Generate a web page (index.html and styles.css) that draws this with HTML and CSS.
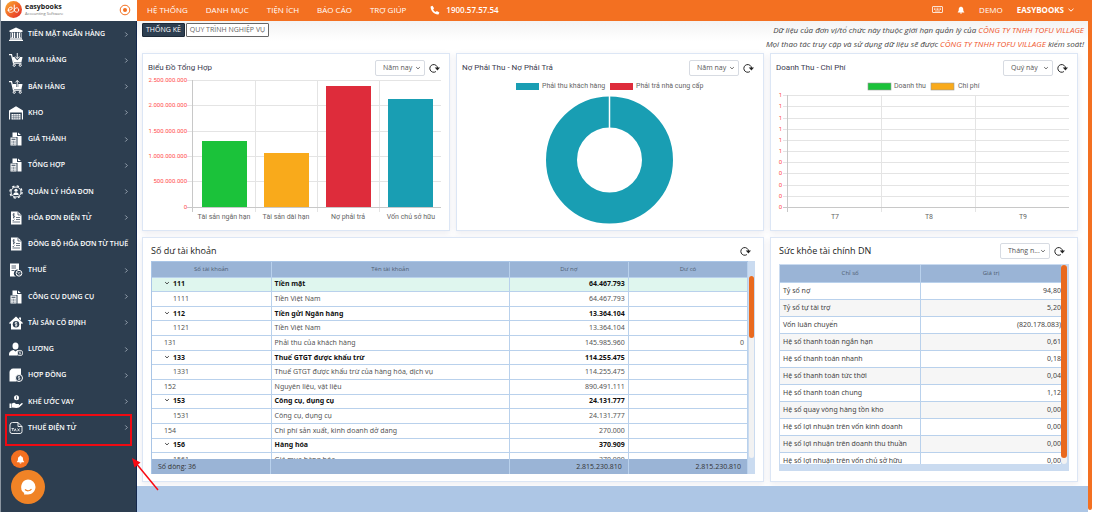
FILE: index.html
```html
<!DOCTYPE html>
<html lang="vi">
<head>
<meta charset="utf-8">
<title>EasyBooks</title>
<link rel="stylesheet" href="styles.css">
</head>
<body>
<svg class="defs" aria-hidden="true">
  <symbol id="i-chev" viewBox="0 0 6 8"><path d="M1.5 1.5 4 4 1.5 6.5" fill="none" stroke="currentColor"/></symbol>
  <symbol id="i-down" viewBox="0 0 8 8"><path d="M1.5 2.8 4 5.2 6.500 2.800" fill="none" stroke="currentColor"/></symbol>
  <symbol id="i-reload" viewBox="0 0 20 18"><path d="M12.500 15.500A7 7 0 1 1 15.500 9" fill="none" stroke="currentColor" stroke-width="1.800"/><path d="M10.500 8h9.500l-4.700 5.500z" fill="currentColor"/></symbol>
  <symbol id="i-bell" viewBox="0 0 16 16"><path d="M8 1c.8 0 1.200.5 1.200 1.200C11.500 2.800 12.500 4.600 12.500 7c0 3 .8 4 2 5v.8h-13V12c1.200-1 2-2 2-5 0-2.400 1-4.200 3.300-4.800C6.800 1.500 7.200 1 8 1zM6 13.500h4c-.2 1-1 1.800-2 1.800s-1.800-.8-2-1.800z" fill="currentColor"/></symbol>
  <symbol id="i-bank" viewBox="0 0 28 28"><path d="M14 1 27 7v3H1V7zM3 11h5v11H3zM9.500 11h3v11h-3zM15.500 11h3v11h-3zM20 11h5v11h-5zM2 22.500h24V25H2zM0 25.500h28V28H0z" fill="currentColor"/><path d="M5 12v9M23 12v9" stroke="#2d3e50" stroke-width="1.500"/></symbol>
  <symbol id="i-cart" viewBox="0 0 28 28"><path d="M0 3h5l4 17h16" fill="none" stroke="currentColor" stroke-width="2.500"/><path d="M7 8h20l-2 10H9z" fill="currentColor"/><circle cx="10.500" cy="24.500" r="2.200" fill="none" stroke="currentColor" stroke-width="2"/><circle cx="22.500" cy="24.500" r="2.200" fill="none" stroke="currentColor" stroke-width="2"/></symbol>
  <symbol id="i-cart-in" viewBox="0 0 28 28"><use href="#i-cart"/><path d="M16.500 1v10m-4-3.500 4 4 4-4" fill="none" stroke="#2d3e50" stroke-width="4"/><path d="M16.500 0v11m-4-4 4 4 4-4" fill="none" stroke="currentColor" stroke-width="1.800"/></symbol>
  <symbol id="i-cart-out" viewBox="0 0 28 28"><use href="#i-cart"/><path d="M16.500 14V2m-4 4 4-4 4 4" fill="none" stroke="#2d3e50" stroke-width="4"/><path d="M16.500 14V1m-4 4 4-4 4 4" fill="none" stroke="currentColor" stroke-width="1.800"/></symbol>
  <symbol id="i-store" viewBox="0 0 28 28"><path d="M1 27V10L14 2l13 8v17" fill="none" stroke="currentColor" stroke-width="2.500"/><path d="M2 9 14 2l12 7v4H2z" fill="currentColor"/><path d="M5 16h18v11H5z" fill="currentColor"/><path d="M5 19.500h18M5 23.500h18M9.500 16v11M14 16v11M18.500 16v11" stroke="#2d3e50"/></symbol>
  <symbol id="i-calc" viewBox="0 0 28 28"><path d="M7 1h9v7h9v19h-8V10H7zM18 1l6 5h-6z" fill="currentColor"/><path d="M3 11h12v16H3z" fill="currentColor"/><path d="M5 14.500h8" stroke="#2d3e50" stroke-width="2"/><path d="M5 18.500h8M5 21.500h8M5 24.500h8" stroke="#2d3e50" stroke-width="1.400" stroke-dasharray="2 1"/></symbol>
  <symbol id="i-gear" viewBox="0 0 28 28"><circle cx="14" cy="14" r="10" fill="none" stroke="currentColor" stroke-width="2"/><circle cx="14" cy="14" r="12.200" fill="none" stroke="currentColor" stroke-width="2.500" stroke-dasharray="4.790"/><circle cx="14" cy="10.500" r="3.200" fill="currentColor"/><path d="M8.500 20c0-4 2.500-5.500 5.500-5.500s5.500 1.500 5.500 5.500z" fill="currentColor"/></symbol>
  <symbol id="i-doc" viewBox="0 0 28 28"><path d="M4 1h14l7 7v19H4z" fill="currentColor"/><path d="M18 1v7h7M14 13h8M14 17h8M7 22h15M11 6c-4 0-4 3-1.500 3.500s2.500 3.500-1.500 3.500M9.500 4v11M7 18l1.500 1.500L11 17" fill="none" stroke="#2d3e50" stroke-width="1.400"/></symbol>
  <symbol id="i-taxdoc" viewBox="0 0 28 28"><path d="M2 1h18v13a7 7 0 0 0-6 13H2z" fill="currentColor"/><path d="M5 6h9M5 10h9M5 15h6" stroke="#2d3e50" stroke-width="1.600"/><circle cx="20" cy="20.500" r="5.800" fill="none" stroke="currentColor" stroke-width="2"/><path d="m17.500 23 5-5" stroke="currentColor" stroke-width="1.500"/><circle cx="18" cy="19" r="1" fill="currentColor"/><circle cx="22" cy="22.500" r="1" fill="currentColor"/></symbol>
  <symbol id="i-house" viewBox="0 0 28 28"><path d="M14 1 28 14l-2 2-2-1.500V27H4V14.500L2 16l-2-2zM20 3h4v6l-4-4z" fill="currentColor"/><circle cx="14" cy="16.500" r="6.500" fill="#2d3e50"/><path d="M16.500 14c-1-1.500-4.500-1.500-4.500.5s4.500 1.500 4.500 3.500-3.500 2-4.500.5M14 11.500v10" fill="none" stroke="currentColor" stroke-width="1.500"/></symbol>
  <symbol id="i-user" viewBox="0 0 28 28"><ellipse cx="13" cy="8" rx="6" ry="7" fill="currentColor"/><path d="M0 26c0-7 4-9 9-10l4 3 4-3c3 .5 5 1.500 6 3l-6 8H0z" fill="currentColor"/><circle cx="22" cy="22" r="5.500" fill="#2d3e50" stroke="currentColor" stroke-width="1.600"/><path d="M23.500 20.500c-1-1-3-.8-3 .4s3 .9 3 2.200-2 1.400-3 .5M22 18.500v7" fill="none" stroke="currentColor"/></symbol>
  <symbol id="i-contract" viewBox="0 0 28 28"><path d="M7 1h17v13l-9 5v8H1V7zM1 6l5-5v5z" fill="currentColor"/><circle cx="20" cy="20" r="7" fill="#2d3e50" stroke="currentColor" stroke-width="2"/><path d="M22 17.800c-1-1.300-4-1-4 .5s4 1.500 4 3.200-3 1.700-4 .5M20 15.500v9" fill="none" stroke="currentColor" stroke-width="1.300"/></symbol>
  <symbol id="i-hand" viewBox="0 0 28 28"><circle cx="15" cy="5.500" r="5" fill="currentColor"/><path d="M15 2.500v6" stroke="#2d3e50" stroke-width="1.500"/><path d="M1 17h4v9H1zM6 17c4-3 6-1 8 1h5c1.500 0 1.500 2.500 0 2.500h-5 6l5-4c1.500-1 3 .5 2 2l-7 6.500c-3 1.500-8 1-14 0z" fill="currentColor"/></symbol>
  <symbol id="i-tax" viewBox="0 0 28 28"><path d="M7 3h11l8 8v10a4 4 0 0 1-4 4H6a4 4 0 0 1-4-4V8a5 5 0 0 1 5-5zM18 3v8h8" fill="none" stroke="currentColor" stroke-width="1.800"/><path d="M5 15h5M7.500 15v5M10.500 20.500l2-5 2 5M17 15l4 5.500M21 15l-4 5.500" fill="none" stroke="currentColor" stroke-width="1.500"/></symbol>
</svg>

<div class="app">
  <aside class="sidebar">
    <div class="brand">
      <svg class="brand-mark" viewBox="0 0 34 34" aria-hidden="true">
        <defs><linearGradient id="g" x1="0" y1="0" x2="1" y2="1"><stop offset="0" stop-color="#fbb034"/><stop offset=".5" stop-color="#f26a2a"/><stop offset="1" stop-color="#e0262c"/></linearGradient></defs>
        <circle cx="17" cy="17" r="17" fill="url(#g)"/>
        <path d="M6 18.500c5 0 8.500-1.500 8.500-4.500 0-3.500-8-2-8 4 0 6 8 6 12 1V8M18.500 18c1-6 9-6 9 0s-9 6-9 0" fill="none" stroke="#fff" stroke-width="2" stroke-linecap="round"/>
      </svg>
      <div class="brand-text"><strong>easybooks</strong><small>Accounting Software</small></div>
      <button class="pin" type="button" aria-label="Thu gọn menu"><svg viewBox="0 0 12 12"><circle cx="6" cy="6" r="4.800" fill="none" stroke="#f37021"/><circle cx="6" cy="6" r="2" fill="#f37021"/></svg></button>
    </div>
    <nav class="menu">
      <a href="#"><svg class="ic"><use href="#i-bank"/></svg><span>TIỀN MẶT NGÂN HÀNG</span><svg class="chev"><use href="#i-chev"/></svg></a>
      <a href="#"><svg class="ic"><use href="#i-cart-in"/></svg><span>MUA HÀNG</span><svg class="chev"><use href="#i-chev"/></svg></a>
      <a href="#"><svg class="ic"><use href="#i-cart-out"/></svg><span>BÁN HÀNG</span><svg class="chev"><use href="#i-chev"/></svg></a>
      <a href="#"><svg class="ic"><use href="#i-store"/></svg><span>KHO</span><svg class="chev"><use href="#i-chev"/></svg></a>
      <a href="#"><svg class="ic"><use href="#i-calc"/></svg><span>GIÁ THÀNH</span><svg class="chev"><use href="#i-chev"/></svg></a>
      <a href="#"><svg class="ic"><use href="#i-calc"/></svg><span>TỔNG HỢP</span><svg class="chev"><use href="#i-chev"/></svg></a>
      <a href="#"><svg class="ic"><use href="#i-gear"/></svg><span>QUẢN LÝ HÓA ĐƠN</span><svg class="chev"><use href="#i-chev"/></svg></a>
      <a href="#"><svg class="ic"><use href="#i-doc"/></svg><span>HÓA ĐƠN ĐIỆN TỬ</span><svg class="chev"><use href="#i-chev"/></svg></a>
      <a href="#"><svg class="ic"><use href="#i-doc"/></svg><span>ĐỒNG BỘ HÓA ĐƠN TỪ THUẾ</span><svg class="chev"><use href="#i-chev"/></svg></a>
      <a href="#"><svg class="ic"><use href="#i-taxdoc"/></svg><span>THUẾ</span><svg class="chev"><use href="#i-chev"/></svg></a>
      <a href="#"><svg class="ic"><use href="#i-calc"/></svg><span>CÔNG CỤ DỤNG CỤ</span><svg class="chev"><use href="#i-chev"/></svg></a>
      <a href="#"><svg class="ic"><use href="#i-house"/></svg><span>TÀI SẢN CỐ ĐỊNH</span><svg class="chev"><use href="#i-chev"/></svg></a>
      <a href="#"><svg class="ic"><use href="#i-user"/></svg><span>LƯƠNG</span><svg class="chev"><use href="#i-chev"/></svg></a>
      <a href="#"><svg class="ic"><use href="#i-contract"/></svg><span>HỢP ĐỒNG</span><svg class="chev"><use href="#i-chev"/></svg></a>
      <a href="#"><svg class="ic"><use href="#i-hand"/></svg><span>KHẾ ƯỚC VAY</span><svg class="chev"><use href="#i-chev"/></svg></a>
      <a href="#" class="marked"><svg class="ic"><use href="#i-tax"/></svg><span>THUẾ ĐIỆN TỬ</span><svg class="chev"><use href="#i-chev"/></svg>
        <svg class="pointer" viewBox="0 0 28 34" aria-hidden="true"><path d="M27 33 4 5" stroke="#f80a12" stroke-width="1.500"/><path d="M1 1l2.500 9.500L9.500 5.500z" fill="#f80a12"/></svg></a>
    </nav>
    <div class="widgets">
      <button class="w-bell" type="button" aria-label="Thông báo"><svg><use href="#i-bell"/></svg></button>
      <button class="w-chat" type="button" aria-label="Trò chuyện"><svg viewBox="0 0 16 16"><path d="M8 .5a7.500 7.500 0 0 1 7.500 7.500c0 4-3.500 7.500-7.500 7.500l-1.500-.1L4 15.500l.2-1.500A7.500 7.500 0 0 1 8 .5z" fill="#fff"/><path d="M5 10.500c2 2 5 1.500 6.500-.5" fill="none" stroke="#f08326" stroke-width="1.200"/></svg></button>
    </div>
  </aside>

  <div class="page">
    <header class="topbar">
      <nav class="topnav">
        <a href="#">HỆ THỐNG</a><a href="#">DANH MỤC</a><a href="#">TIỆN ÍCH</a><a href="#">BÁO CÁO</a><a href="#">TRỢ GIÚP</a>
      </nav>
      <a class="phone" href="#"><svg viewBox="0 0 16 16"><path d="M1 2.500 4 1l2.500 4L5 7c1 2 2 3 4 4l2-1.500 4 2.500-1.500 3C7 15.500.5 9 1 2.500z" fill="#fff"/></svg>1900.57.57.54</a>
      <div class="account">
        <button type="button" aria-label="Bàn phím"><svg class="kbd" viewBox="0 0 22 14"><rect x="1" y="1" width="20" height="12" rx="1" fill="none" stroke="#fff" stroke-width="1.600"/><path d="M4 4.500h14M4 7h14" stroke="#fff" stroke-width="1.400" stroke-dasharray="2 1"/><path d="M6 10h10" stroke="#fff" stroke-width="1.400"/></svg></button>
        <button type="button" aria-label="Thông báo"><svg class="bell"><use href="#i-bell"/></svg></button>
        <span class="demo">DEMO</span>
        <button type="button" class="user">EASYBOOKS<svg><use href="#i-down"/></svg></button>
      </div>
    </header>

    <div class="body">
      <main class="main">
        <div class="intro">
          <div class="tabs"><button type="button" class="tab active">THỐNG KÊ</button><button type="button" class="tab">QUY TRÌNH NGHIỆP VỤ</button></div>
          <p class="notice">Dữ liệu của đơn vị/tổ chức này thuộc giới hạn quản lý của <b>CÔNG TY TNHH TOFU VILLAGE</b><br>Mọi thao tác truy cập và sử dụng dữ liệu sẽ được <b>CÔNG TY TNHH TOFU VILLAGE</b> kiểm soát!</p>
        </div>

        <div class="grid">
          <section class="card">
            <div class="card-head"><h2>Biểu Đồ Tổng Hợp</h2>
              <span class="pick"><select aria-label="Kỳ biểu đồ tổng hợp"><option>Năm nay</option></select><svg><use href="#i-down"/></svg></span>
              <button class="reload" type="button" aria-label="Tải lại"><svg><use href="#i-reload"/></svg></button></div>
            <svg class="chart" viewBox="0 0 306 148" role="img" aria-label="Biểu đồ tổng hợp">
              <path class="gridline" d="M44 4.500h254M44 29.500h254M44 55.500h254M44 80.500h254M44 105.500h254M112.500 4v132M174.500 4v132M236.500 4v132"/>
              <path class="axis" d="M49.500 4v132M44 131.500h254"/>
              <rect x="59" y="65" width="45" height="66" fill="#1bc23a"/><rect x="121" y="77" width="45" height="54" fill="#f9aa1b"/><rect x="183" y="10" width="45" height="121" fill="#de2c3b"/><rect x="245" y="23" width="45" height="108" fill="#199eb3"/>
              <g class="yt"><text x="44" y="6">2.500.000.000</text><text x="44" y="31">2.000.000.000</text><text x="44" y="57">1.500.000.000</text><text x="44" y="82">1.000.000.000</text><text x="44" y="107">500.000.000</text><text x="44" y="133">0</text></g>
              <g class="xt"><text x="81" y="143">Tài sản ngắn hạn</text><text x="143" y="143">Tài sản dài hạn</text><text x="205" y="143">Nợ phải trả</text><text x="268" y="143">Vốn chủ sở hữu</text></g>
            </svg>
          </section>

          <section class="card">
            <div class="card-head"><h2>Nợ Phải Thu - Nợ Phải Trả</h2>
              <span class="pick"><select aria-label="Kỳ nợ phải thu, phải trả"><option>Năm nay</option></select><svg><use href="#i-down"/></svg></span>
              <button class="reload" type="button" aria-label="Tải lại"><svg><use href="#i-reload"/></svg></button></div>
            <svg class="chart" viewBox="0 0 306 148" role="img" aria-label="Nợ phải thu, nợ phải trả">
              <rect x="59" y="7" width="23" height="7" fill="#199eb3"/><rect x="153" y="7" width="23" height="7" fill="#de2c3b"/>
              <g class="lt"><text x="85" y="12">Phải thu khách hàng</text><text x="179" y="12">Phải trả nhà cung cấp</text></g>
              <circle cx="152.500" cy="84" r="48" fill="none" stroke="#199eb3" stroke-width="31"/>
              <path d="M152.500 20v32" stroke="#fff" stroke-width="1.500"/>
            </svg>
          </section>

          <section class="card">
            <div class="card-head"><h2>Doanh Thu - Chi Phí</h2>
              <span class="pick"><select aria-label="Kỳ doanh thu, chi phí"><option>Quý này</option></select><svg><use href="#i-down"/></svg></span>
              <button class="reload" type="button" aria-label="Tải lại"><svg><use href="#i-reload"/></svg></button></div>
            <svg class="chart" viewBox="0 0 306 148" role="img" aria-label="Doanh thu, chi phí">
              <g stroke="#999" stroke-width=".6"><rect x="97" y="7" width="23" height="7" fill="#1bc23a"/><rect x="160" y="7" width="23" height="7" fill="#f9aa1b"/></g>
              <g class="lt"><text x="123" y="12">Doanh thu</text><text x="187" y="12">Chi phí</text></g>
              <path class="gridline" d="M12 19.500h286M12 30.500h286M12 42.500h286M12 53.500h286M12 64.500h286M12 75.500h286M12 86.500h286M12 97.500h286M12 109.500h286M12 120.500h286M110.500 19v117M204.500 19v117"/>
              <path class="axis" d="M16.500 19v117M12 131.500h286"/>
              <g class="yt"><text x="11" y="21">1</text><text x="11" y="32">1</text><text x="11" y="44">1</text><text x="11" y="55">1</text><text x="11" y="66">1</text><text x="11" y="77">1</text><text x="11" y="88">0</text><text x="11" y="99">0</text><text x="11" y="111">0</text><text x="11" y="122">0</text><text x="11" y="133">0</text></g>
              <g class="xt"><text x="64" y="143">T7</text><text x="158" y="143">T8</text><text x="252" y="143">T9</text></g>
            </svg>
          </section>

          <section class="card table-card wide">
            <div class="card-head"><h2>Số dư tài khoản</h2>
              <button class="reload" type="button" aria-label="Tải lại"><svg><use href="#i-reload"/></svg></button></div>
            <div class="frame">
              <div class="sheet">
                <div class="clip">
                  <table class="ledger">
                    <colgroup><col class="c1"><col class="c2"><col class="c1"><col class="c1"></colgroup>
                    <thead><tr><th>Số tài khoản</th><th>Tên tài khoản</th><th>Dư nợ</th><th>Dư có</th></tr></thead>
                    <tbody>
                      <tr class="sum sel"><td><svg><use href="#i-down"/></svg>111</td><td>Tiền mặt</td><td>64.467.793</td><td></td></tr>
                      <tr class="sub"><td>1111</td><td>Tiền Việt Nam</td><td>64.467.793</td><td></td></tr>
                      <tr class="sum"><td><svg><use href="#i-down"/></svg>112</td><td>Tiền gửi Ngân hàng</td><td>13.364.104</td><td></td></tr>
                      <tr class="sub"><td>1121</td><td>Tiền Việt Nam</td><td>13.364.104</td><td></td></tr>
                      <tr><td>131</td><td>Phải thu của khách hàng</td><td>145.985.960</td><td>0</td></tr>
                      <tr class="sum"><td><svg><use href="#i-down"/></svg>133</td><td>Thuế GTGT được khấu trừ</td><td>114.255.475</td><td></td></tr>
                      <tr class="sub"><td>1331</td><td>Thuế GTGT được khấu trừ của hàng hóa, dịch vụ</td><td>114.255.475</td><td></td></tr>
                      <tr><td>152</td><td>Nguyên liệu, vật liệu</td><td>890.491.111</td><td></td></tr>
                      <tr class="sum"><td><svg><use href="#i-down"/></svg>153</td><td>Công cụ, dụng cụ</td><td>24.131.777</td><td></td></tr>
                      <tr class="sub"><td>1531</td><td>Công cụ, dụng cụ</td><td>24.131.777</td><td></td></tr>
                      <tr><td>154</td><td>Chi phí sản xuất, kinh doanh dở dang</td><td>270.000</td><td></td></tr>
                      <tr class="sum"><td><svg><use href="#i-down"/></svg>156</td><td>Hàng hóa</td><td>370.909</td><td></td></tr>
                      <tr class="sub"><td>1561</td><td>Giá mua hàng hóa</td><td>370.909</td><td></td></tr>
                    </tbody>
                  </table>
                </div>
                <div class="totals"><span>Số dòng: 36</span><span></span><span>2.815.230.810</span><span>2.815.230.810</span></div>
              </div>
              <div class="scroll"><div class="track"><i></i></div></div>
            </div>
          </section>

          <section class="card table-card">
            <div class="card-head"><h2>Sức khỏe tài chính DN</h2>
              <span class="pick"><select aria-label="Kỳ sức khỏe tài chính"><option>Tháng n...</option></select><svg><use href="#i-down"/></svg></span>
              <button class="reload" type="button" aria-label="Tải lại"><svg><use href="#i-reload"/></svg></button></div>
            <div class="frame health-frame">
              <div class="clip">
                <table class="health">
                  <thead><tr><th>Chỉ số</th><th>Giá trị</th></tr></thead>
                  <tbody>
                    <tr><td>Tỷ số nợ</td><td>94,80</td></tr>
                    <tr><td>Tỷ số tự tài trợ</td><td>5,20</td></tr>
                    <tr><td>Vốn luân chuyển</td><td>(820.178.083)</td></tr>
                    <tr><td>Hệ số thanh toán ngắn hạn</td><td>0,61</td></tr>
                    <tr><td>Hệ số thanh toán nhanh</td><td>0,18</td></tr>
                    <tr><td>Hệ số thanh toán tức thời</td><td>0,04</td></tr>
                    <tr><td>Hệ số thanh toán chung</td><td>1,12</td></tr>
                    <tr><td>Hệ số quay vòng hàng tồn kho</td><td>0,00</td></tr>
                    <tr><td>Hệ số lợi nhuận trên vốn kinh doanh</td><td>0,00</td></tr>
                    <tr><td>Hệ số lợi nhuận trên doanh thu thuần</td><td>0,00</td></tr>
                    <tr><td>Hệ số lợi nhuận trên vốn chủ sở hữu</td><td>0,00</td></tr>
                  </tbody>
                </table>
              </div>
              <div class="health-scroll"><i></i></div>
            </div>
          </section>
        </div>
        <footer class="foot"></footer>
      </main>
      <div class="page-scroll"></div>
    </div>
  </div>
</div>
</body>
</html>
```

FILE: styles.css
```css
* { box-sizing: border-box; }
body { margin: 0; background: #fff; color: #444; font: 7px/10px "Open Sans", "Noto Sans", sans-serif; }
a { color: inherit; text-decoration: none; }
button { margin: 0; padding: 0; border: 0; background: none; color: inherit; font: inherit; }
svg { display: block; }
.defs { position: absolute; width: 0; height: 0; }
.app { display: flex; min-height: 100vh; padding-bottom: 1px; }

/* Sidebar */
.sidebar { display: flex; flex-direction: column; flex: 0 0 137px; min-width: 0; border-left: 1px solid #8c96a1; border-right: 1px solid #14284d; background: #2d3e50; color: #fff; }
.brand { display: flex; align-items: center; gap: 3px; height: 21px; margin-right: -1px; padding: 0 6px 2px 4px; background: #fff; color: #222; }
.brand-mark { width: 17px; height: 17px; }
.brand-text { display: flex; flex-direction: column; flex: 1; }
.brand-text strong { font-size: 7px; line-height: 8px; }
.brand-text small { font-size: 4px; line-height: 6px; color: #777; }
.pin svg { width: 12px; height: 12px; }
.menu { display: flex; flex-direction: column; flex: 1; }
.menu a { position: relative; display: flex; flex: 1; align-items: center; padding: 0 7px 0 8px; white-space: nowrap; font-size: 7px; font-weight: 600; line-height: 10px; }
.menu span { flex: 1 1 0; min-width: 0; margin-left: 5px; }
.ic { flex: none; width: 14px; height: 14px; }
.chev { flex: none; width: 5px; height: 7px; color: #a9b4c0; }
.marked::after { content: ""; position: absolute; inset: -1px 4px -5px 4px; border: 2px solid #f00a12; }
.menu .pointer { position: absolute; left: 130px; top: 42px; width: 28px; height: 34px; z-index: 2; }
.widgets { display: flex; flex-direction: column; align-items: flex-start; gap: 2px; padding: 9px 0 8px 10px; }
.w-bell, .w-chat { display: grid; place-items: center; border-radius: 50%; background: #f08326; color: #fff; }
.w-bell { width: 18px; height: 18px; background: #f37021; }
.w-bell svg { width: 9px; height: 9px; }
.w-chat { width: 34px; height: 34px; }
.w-chat svg { width: 16px; height: 16px; }

/* Top bar */
.page { display: flex; flex-direction: column; flex: 1; min-width: 0; }
.topbar { display: flex; align-items: center; height: 21px; margin-right: 1px; padding: 0 17px 2px 10px; background: #f37021; color: #fff; font-size: 8px; line-height: 12px; white-space: nowrap; }
.topnav { display: flex; gap: 18px; }
.phone { display: flex; align-items: center; gap: 6px; margin-left: 24px; font-size: 8px; font-weight: 600; }
.phone svg { width: 10px; height: 10px; }
.account { display: flex; align-items: center; gap: 14px; margin-left: auto; }
.kbd { width: 11px; height: 7px; }
.bell { width: 8px; height: 8px; }
.user { display: flex; align-items: center; gap: 3px; font-weight: 700; }
.user svg { width: 8px; height: 8px; }

/* Page body */
.body { display: flex; flex: 1; }
.main { display: flex; flex-direction: column; flex: 1; min-width: 0; background: linear-gradient(#f3f3f3, #fff 20px); }
.page-scroll { width: 4px; margin: 0 1px 2px 0; background: #f37021; border-radius: 0 0 2px 2px; }
.intro { display: flex; justify-content: space-between; height: 32px; padding: 2px 4px 0 5px; }
.tabs { display: flex; gap: 1px; height: 14px; }
.tab { padding: 0 3px; border: 1px solid #666; border-radius: 1px; background: #fff; color: #666; font-size: 7px; line-height: 10px; }
.tab.active { background: #2d3e50; border-color: #1c2836; color: #fff; }
.notice { margin: 0; text-align: right; font-size: 8px; font-style: italic; line-height: 14px; color: #444; }
.notice b { font-weight: 400; color: #f0572d; }
.grid { display: grid; grid-template-columns: repeat(3, minmax(0, 1fr)); gap: 6px; padding: 0 10px 4px 5px; }
.wide { grid-column: span 2; }
.card { padding: 6px 0; border: 1px solid #dce6f5; background: #fff; box-shadow: 0 2px 6px rgba(60, 60, 110, .1); }
.card-head { display: flex; align-items: center; gap: 4px; height: 16px; padding: 0 9px 0 5px; }
.card-head h2 { flex: 1; margin: 0; font: 400 8px/12px Roboto, sans-serif; color: #3c3c50; }
.pick { position: relative; display: block; width: 50px; height: 16px; }
.pick select { display: block; width: 100%; height: 100%; padding: 0 0 0 7px; border: 1px solid #d7dbe2; border-radius: 2px; background: #fff; color: #555; font: 7px/12px "Open Sans", sans-serif; appearance: none; }
.pick svg { position: absolute; right: 4px; top: 5px; width: 6px; height: 6px; pointer-events: none; }
.reload svg { width: 11px; height: 10px; color: #222; }

/* Charts */
.chart { width: 100%; }
.gridline { fill: none; stroke: #e4e4e4; }
.axis { fill: none; stroke: #c8c8c8; }
.chart text { font-family: Roboto, "Liberation Sans", sans-serif; font-size: 7px; fill: #666; }
.chart .yt text { font-size: 6px; fill: #ff4b4b; text-anchor: end; }
.chart .xt text { text-anchor: middle; }

/* Tables */
.table-card { padding: 5px 8px 7px; }
.table-card .card-head { padding: 0 4px 0 0; }
.table-card .card-head h2 { font: 400 9px/14px "Open Sans", sans-serif; color: #222; }
table { width: 100%; border-collapse: collapse; table-layout: fixed; }
.frame { display: flex; margin-top: 2px; background: #cadbf0; }
.sheet { flex: 1; min-width: 0; border: solid #a9c5e6; border-width: 1px 0 0 1px; }
.clip { overflow: hidden; background: #fff; }
.sheet .clip { height: 197px; }
.c1 { width: 20%; }
.c2 { width: 40%; }
th { background: #9ab4d6; font-size: 6px; font-weight: 400; color: #4f5d70; }
th, td { padding: 0 3px; border: 1px solid #b9d1ec; border-width: 0 1px 1px 0; white-space: nowrap; }
td { font-family: "Noto Sans", "Open Sans", sans-serif; }
.ledger { height: 206px; }
.ledger th { height: 15px; }
.ledger td { line-height: 12px; color: #555; }
.ledger td:first-child { padding-left: 12px; }
.ledger .sub td:first-child { padding-left: 21px; }
.ledger td:nth-child(n+3) { text-align: right; }
.ledger .sum td { font-weight: 700; color: #111; }
.ledger .sel td { background: #dff6ee; }
.ledger td svg { display: inline-block; width: 6px; height: 6px; margin-right: 3px; }
.totals { display: grid; grid-template-columns: 1fr 2fr 1fr 1fr; height: 15px; background: #9ab4d6; color: #333; font-size: 7px; line-height: 15px; }
.totals span { padding: 0 6px; border-right: 1px solid #b9d1ec; }
.totals span:nth-child(n+3) { text-align: right; }
.scroll { width: 7px; padding: 15px 1px; }
.track { height: 182px; border-radius: 3px; background: #f2f2f2; }
.track i { display: block; height: 62px; border-radius: 3px; background: #e96a1f; }
.health-frame { position: relative; display: block; margin-top: 5px; padding: 1px 7px 7px 1px; }
.health-frame .clip { height: 199px; }
.health th { height: 17px; }
.health td { height: 17px; padding: 0 0 0 3px; color: #444; }
.health td + td { text-align: right; }
.health tr:nth-child(even) td { background: #f6f6f6; }
.health-scroll { position: absolute; top: 1px; right: 2px; width: 6px; height: 199px; border-radius: 3px; background: #f2f2f2; }
.health-scroll i { display: block; height: 193px; border-radius: 3px; background: #e96a1f; }
.foot { flex: 1; min-height: 26px; background: #adc6e5; }
```
